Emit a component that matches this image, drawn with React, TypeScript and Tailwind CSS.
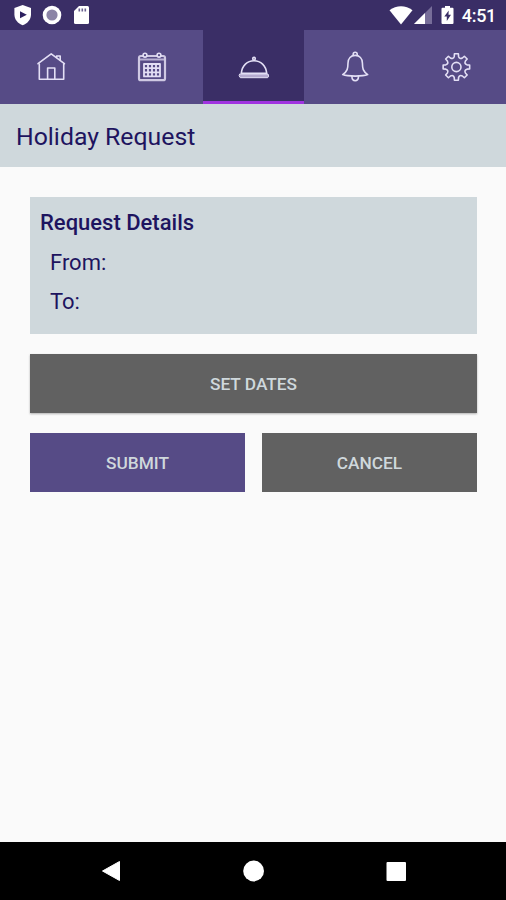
import React from "react";

type IconProps = {
  children: React.ReactNode;
};

const TabIcon: React.FC<IconProps> = (props) => {
  return (
    <svg
      className="w-9 h-9"
      viewBox="0 0 36 36"
      fill="none"
      stroke="#e3dff5"
      strokeWidth="1.6"
      strokeLinecap="round"
      strokeLinejoin="round"
    >
      {props.children}
    </svg>
  );
};

const HomeIcon = () => (
  <TabIcon>
    <path d="M6.3 15v15.2h24.4V15" />
    <path d="M5 14.7 18.2 4.8l13.2 9.9" />
    <path d="M23.600 8.400V7h3.600v4.200" />
    <path d="M14.600 30V19h7.200v11" />
  </TabIcon>
);

const CalendarIcon = () => (
  <TabIcon>
    <path d="M5.500 10.500h25" stroke="#b9b1d3" strokeWidth="2.200" />
    <rect x="5" y="7" width="26" height="24.200" rx="1.800" strokeWidth="2.200" stroke="#cfc9e3" />
    <circle cx="11" cy="6.200" r="1.900" fill="#564b86" />
    <circle cx="25" cy="6.200" r="1.900" fill="#564b86" />
    <path
      d="M10 15h16v12.400H10zM10 19.200h16M10 23.300h16M14 15v12.400M18 15v12.400M22 15v12.400"
      strokeWidth="1.800"
    />
  </TabIcon>
);

const ServiceIcon = () => (
  <TabIcon>
    <circle cx="18" cy="9.700" r="1.300" />
    <path d="M5.300 24.200C6.100 16.600 11.200 11.700 18 11.700s11.900 4.900 12.700 12.500z" />
    <path d="M4 25h28l.7 2.200-1 1.500H4.300l-1-1.500z" fill="#b5abd0" strokeWidth="1" />
  </TabIcon>
);

const BellIcon = () => (
  <TabIcon>
    <path d="M16.200 6.200V5.200a2 2 0 0 1 4 0v1" />
    <path d="M5.700 25.600c4.800-3.400 5.200-6 5.300-11.600.1-4.600 2.900-7.600 7.200-7.600s7.100 3 7.200 7.600c.1 5.600.5 8.200 5.300 11.600-5 2-20 2-25 0z" />
    <path d="M14.900 27.400c.2 5.800 6.400 5.800 6.600 0" />
  </TabIcon>
);

const GEAR_TEETH = 8;

const gearPoint = (angle: number, radius: number) => {
  const rad = ((angle - 90) * Math.PI) / 180;
  const x = 18.4 + radius * Math.cos(rad);
  const y = 18 + radius * Math.sin(rad);
  return `${x.toFixed(2)} ${y.toFixed(2)}`;
};

const gearPath = () => {
  let path = "";
  for (let i = 0; i < GEAR_TEETH; i++) {
    const center = (i * 360) / GEAR_TEETH;
    path += `${i === 0 ? "M" : "L"}${gearPoint(center - 8.5, 13.4)}`;
    path += `L${gearPoint(center + 8.5, 13.4)}L${gearPoint(center + 11.5, 10.8)}`;
    // rounded valley up to the next tooth
    path += `Q${gearPoint(center + 22.5, 8.2)} ${gearPoint(center + 33.5, 10.8)}`;
  }
  return `${path}Z`;
};

const GearIcon = () => (
  <TabIcon>
    <path d={gearPath()} />
    <circle cx="18.4" cy="18" r="4.600" />
  </TabIcon>
);

const tabs = [
  { name: "home", icon: <HomeIcon /> },
  { name: "calendar", icon: <CalendarIcon /> },
  { name: "request", icon: <ServiceIcon /> },
  { name: "alerts", icon: <BellIcon /> },
  { name: "settings", icon: <GearIcon /> },
];

const StatusBar = () => {
  return (
    <div className="h-[30px] shrink-0 flex items-center justify-between pl-[13px] pr-[10px] bg-[#3a2e66] text-white">
      <div className="flex items-center gap-[10px]">
        <svg className="w-[19px] h-[22px]" viewBox="0 0 19 22">
          <path d="M9.700 1 18 4v6.500c0 5-3.500 9-8.300 10.700C4.900 19.500 1.400 15.500 1.400 10.500V4z" fill="#fff" />
          <path d="M7 7.300v7l6.800-3.500z" fill="#2c2060" />
        </svg>
        <svg className="w-5 h-5" viewBox="0 0 20 20">
          <circle cx="10" cy="10" r="9.300" fill="#fff" />
          <circle cx="10" cy="10" r="5.600" fill="#8b84a6" />
        </svg>
        <svg className="w-[18px] h-5" viewBox="0 0 18 20">
          <path d="M7 1h8.500A1.500 1.500 0 0 1 17 2.500v15a1.500 1.500 0 0 1-1.500 1.500h-12A1.500 1.500 0 0 1 2 17.500V6z" fill="#fff" />
          <path d="M7.300 3.500v3M10.300 3.500v3M13.300 3.500v3" stroke="#6a6090" strokeWidth="1.600" />
        </svg>
      </div>
      <div className="flex items-center">
        <svg className="w-6 h-5" viewBox="0 0 24 20">
          <path d="M.5 5.200C7.300 0 16.700 0 23.500 5.200L12 19.500z" fill="#fff" />
        </svg>
        <svg className="w-[18px] h-[18px] ml-px" viewBox="0 0 18 18">
          <path d="M18 0v18H0z" fill="#776d99" />
          <path d="M11 7v11H0z" fill="#fff" />
        </svg>
        <svg className="w-[13px] h-5 ml-[9px]" viewBox="0 0 13 20">
          <path d="M4 1h5v1.700h2.500a1 1 0 0 1 1 1V18a1 1 0 0 1-1 1h-10a1 1 0 0 1-1-1V3.700a1 1 0 0 1 1-1H4z" fill="#fff" />
          <path d="M7.700 5.500 3.300 11.500h2.500v4.500l4.200-6.300H7.500z" fill="#3a2e66" />
        </svg>
        <span className="ml-2 pt-[2px] text-[18px] leading-5 font-medium tracking-[-0.3px]">4:51</span>
      </div>
    </div>
  );
};

const TabBar: React.FC<{ selected: string }> = (props) => {
  return (
    <div className="h-[74px] shrink-0 grid grid-cols-[101px_102px_101px_101px_101px] bg-[#564b86]">
      {tabs.map((tab) => {
        const className =
          tab.name === props.selected
            ? "bg-[#3a2e66] shadow-[inset_0_-3px_0_#a033e0]"
            : "";
        return (
          <button
            key={tab.name}
            aria-label={tab.name}
            className={`flex items-center justify-center ${className}`}
          >
            {tab.icon}
          </button>
        );
      })}
    </div>
  );
};

const NavigationBar = () => {
  return (
    <div className="h-[58px] shrink-0 flex items-center justify-between pl-[101px] pr-[99px] bg-black">
      <svg className="w-5 h-[22px]" viewBox="0 0 20 22">
        <path d="M18.500 1.500v19L1.500 11z" fill="#fff" stroke="#fff" strokeLinejoin="round" />
      </svg>
      <svg className="w-[22px] h-[22px]" viewBox="0 0 22 22">
        <circle cx="10.600" cy="11" r="10.400" fill="#fff" />
      </svg>
      <svg className="w-[21px] h-[21px]" viewBox="0 0 21 21">
        <rect x="0.500" y="1" width="19.500" height="19" rx="1" fill="#fff" />
      </svg>
    </div>
  );
};

const buttonClass =
  "h-[59px] pt-[2px] text-[17.3px] font-medium text-[#cfd8dc]";

export default function App() {
  return (
    <div className="w-[506px] h-[900px] flex flex-col overflow-hidden bg-[#fafafa] font-[Roboto,sans-serif] text-[#1e145f]">
      <StatusBar />
      <TabBar selected="request" />
      <h1 className="h-[63px] shrink-0 flex items-center px-4 pt-[3px] bg-[#cfd8dc] text-[24.8px]">
        Holiday Request
      </h1>
      <main className="flex-1 pt-[30px] pl-[30px] pr-[29px]">
        <section className="h-[137px] pt-[6px] pl-[10px] bg-[#cfd8dc] text-[22px] leading-[39.5px]">
          <h2 className="font-medium">Request Details</h2>
          <p className="pl-[10px]">From:</p>
          <p className="pl-[10px]">To:</p>
        </section>
        <button
          className={`${buttonClass} mt-5 w-full bg-[#616161] shadow-[0_1px_2px_rgba(0,0,0,0.3)]`}
        >
          SET DATES
        </button>
        <div className="mt-5 grid grid-cols-2 gap-[17px]">
          <button className={`${buttonClass} bg-[#564b86]`}>SUBMIT</button>
          <button className={`${buttonClass} bg-[#616161]`}>CANCEL</button>
        </div>
      </main>
      <NavigationBar />
    </div>
  );
}
